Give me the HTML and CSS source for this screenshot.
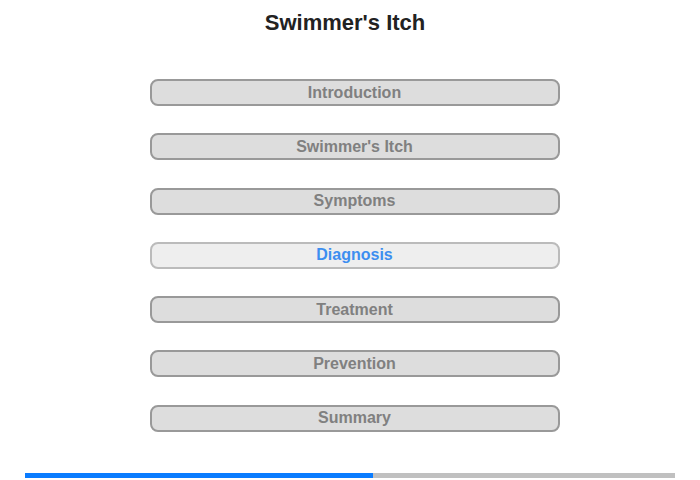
FILE: index.html
```html
<!DOCTYPE html>
<html lang="en">
<head>
  <meta charset="UTF-8" />
  <meta name="viewport" content="width=device-width, initial-scale=1.0" />
  <title>Swimmer's Itch</title>
  <link rel="stylesheet" href="styles.css">
</head>
<body>
  <h2 class="title">Swimmer's Itch</h2>

  <div class="menu">
    <button class="item">Introduction</button>
    <button class="item">Swimmer's Itch</button>
    <button class="item">Symptoms</button>
    <button class="item active">Diagnosis</button>
    <button class="item">Treatment</button>
    <button class="item">Prevention</button>
    <button class="item">Summary</button>
  </div>

  <div class="progress">
    <div class="progress-fill" style="width: 53.5%"></div>
  </div>
</body>
</html>
```

FILE: styles.css
```css
body {
  margin: 0;
  width: 700px;
  height: 480px;
  font-family: "Liberation Sans", Arial, sans-serif;
  background: #fff;
  overflow: hidden;
}
.title {
  margin: 0;
  padding: 10px 10px 0 0;
  height: 26px;
  text-align: center;
  font-size: 22px;
  font-weight: bold;
  color: #222;
}
.menu {
  display: flex;
  flex-direction: column;
  align-items: center;
  gap: 27.3px;
  margin-top: 43px;
  padding-left: 9px;
}
.item {
  width: 410px;
  height: 27px;
  margin: 0;
  padding: 0;
  background: #dddddd;
  border: 2px solid #999;
  border-radius: 8px;
  font-family: "Liberation Sans", Arial, sans-serif;
  font-size: 16px;
  font-weight: bold;
  color: #808080;
}
.item.active {
  background: #eeeeee;
  border-color: #bbbbbb;
  color: #3d8ef0;
}
.progress {
  margin: 41px 25px 0;
  height: 5px;
  background: #c0c0c0;
}
.progress-fill {
  height: 100%;
  background: #0a7cff;
}
```
